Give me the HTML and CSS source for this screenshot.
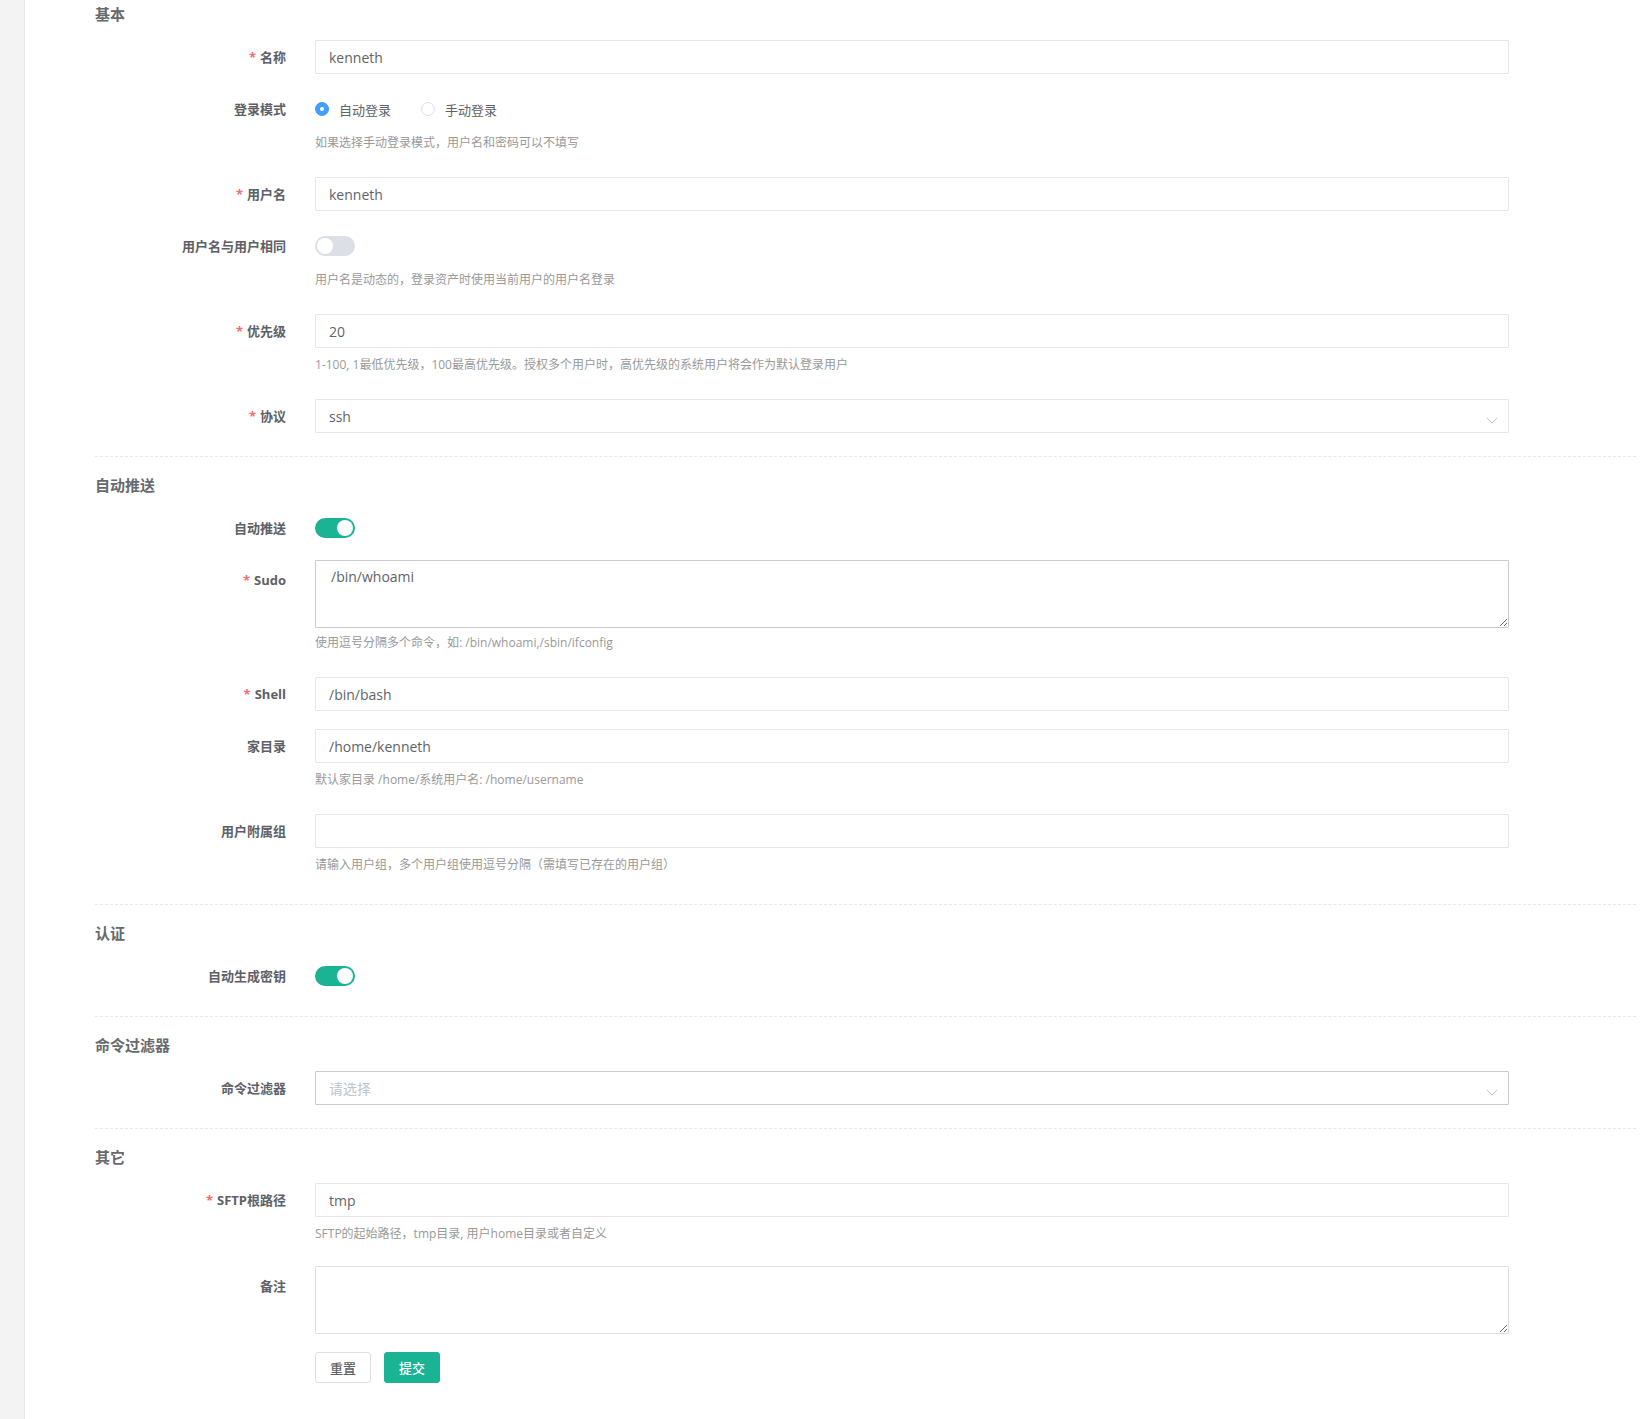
FILE: index.html
```html
<!DOCTYPE html>
<html lang="zh-CN">
<head>
    <meta charset="UTF-8">
    <meta name="viewport" content="width=device-width, initial-scale=1.0">
    <title>创建系统用户</title>
    <link rel="stylesheet" href="styles.css">
</head>
<body>
<div class="layout">
    <div class="sidebar"></div>
    <div class="panel">
        <form class="form">
            <!-- 基本 -->
            <div class="group">
                <h3 class="group-title">基本</h3>
                <div class="form-item">
                    <label class="form-label required">名称</label>
                    <div class="form-field">
                        <input class="input" type="text" value="kenneth">
                    </div>
                </div>
                <div class="form-item">
                    <label class="form-label">登录模式</label>
                    <div class="form-field">
                        <div class="control-line">
                            <span class="radio checked"><span class="radio-dot"></span>自动登录</span>
                            <span class="radio"><span class="radio-dot"></span>手动登录</span>
                        </div>
                        <div class="hint">如果选择手动登录模式，用户名和密码可以不填写</div>
                    </div>
                </div>
                <div class="form-item">
                    <label class="form-label required">用户名</label>
                    <div class="form-field">
                        <input class="input" type="text" value="kenneth">
                    </div>
                </div>
                <div class="form-item">
                    <label class="form-label">用户名与用户相同</label>
                    <div class="form-field">
                        <div class="control-line">
                            <span class="switch"><span class="switch-knob"></span></span>
                        </div>
                        <div class="hint">用户名是动态的，登录资产时使用当前用户的用户名登录</div>
                    </div>
                </div>
                <div class="form-item">
                    <label class="form-label required">优先级</label>
                    <div class="form-field">
                        <input class="input" type="text" value="20">
                        <div class="hint">1-100, 1最低优先级，100最高优先级。授权多个用户时，高优先级的系统用户将会作为默认登录用户</div>
                    </div>
                </div>
                <div class="form-item">
                    <label class="form-label required">协议</label>
                    <div class="form-field">
                        <div class="select">
                            <input class="input" type="text" value="ssh" readonly>
                            <svg class="select-arrow" width="12" height="12" viewBox="0 0 12 12"><polyline points="1,4 6,9 11,4" fill="none" stroke="#c0c4cc" stroke-width="1"/></svg>
                        </div>
                    </div>
                </div>
            </div>

            <!-- 自动推送 -->
            <div class="group">
                <h3 class="group-title">自动推送</h3>
                <div class="form-item switch-item">
                    <label class="form-label">自动推送</label>
                    <div class="form-field">
                        <div class="control-line">
                            <span class="switch on"><span class="switch-knob"></span></span>
                        </div>
                    </div>
                </div>
                <div class="form-item">
                    <label class="form-label label-area required">Sudo</label>
                    <div class="form-field">
                        <textarea class="textarea textarea-dark">/bin/whoami</textarea>
                        <div class="hint hint-tight">使用逗号分隔多个命令，如: /bin/whoami,/sbin/ifconfig</div>
                    </div>
                </div>
                <div class="form-item">
                    <label class="form-label required">Shell</label>
                    <div class="form-field">
                        <input class="input" type="text" value="/bin/bash">
                    </div>
                </div>
                <div class="form-item">
                    <label class="form-label">家目录</label>
                    <div class="form-field">
                        <input class="input" type="text" value="/home/kenneth">
                        <div class="hint">默认家目录 /home/系统用户名: /home/username</div>
                    </div>
                </div>
                <div class="form-item">
                    <label class="form-label">用户附属组</label>
                    <div class="form-field">
                        <input class="input" type="text" value="">
                        <div class="hint">请输入用户组，多个用户组使用逗号分隔（需填写已存在的用户组）</div>
                    </div>
                </div>
            </div>

            <!-- 认证 -->
            <div class="group">
                <h3 class="group-title">认证</h3>
                <div class="form-item">
                    <label class="form-label">自动生成密钥</label>
                    <div class="form-field">
                        <div class="control-line">
                            <span class="switch on"><span class="switch-knob"></span></span>
                        </div>
                    </div>
                </div>
            </div>

            <!-- 命令过滤器 -->
            <div class="group">
                <h3 class="group-title">命令过滤器</h3>
                <div class="form-item">
                    <label class="form-label">命令过滤器</label>
                    <div class="form-field">
                        <div class="select">
                            <input class="input input-dark" type="text" placeholder="请选择" readonly>
                            <svg class="select-arrow" width="12" height="12" viewBox="0 0 12 12"><polyline points="1,4 6,9 11,4" fill="none" stroke="#c0c4cc" stroke-width="1"/></svg>
                        </div>
                    </div>
                </div>
            </div>

            <!-- 其它 -->
            <div class="group">
                <h3 class="group-title">其它</h3>
                <div class="form-item">
                    <label class="form-label required">SFTP根路径</label>
                    <div class="form-field">
                        <input class="input" type="text" value="tmp">
                        <div class="hint hint-short">SFTP的起始路径，tmp目录, 用户home目录或者自定义</div>
                    </div>
                </div>
                <div class="form-item">
                    <label class="form-label label-area">备注</label>
                    <div class="form-field">
                        <textarea class="textarea"></textarea>
                    </div>
                </div>
                <div class="form-item">
                    <span></span>
                    <div class="form-actions">
                        <button type="button" class="btn">重置</button>
                        <button type="button" class="btn btn-primary">提交</button>
                    </div>
                </div>
            </div>
        </form>
    </div>
</div>
</body>
</html>
```

FILE: styles.css
```css
* {
    box-sizing: border-box;
}
body {
    margin: 0;
    background: #fff;
    font-family: "Open Sans", "Noto Sans CJK SC", sans-serif;
    color: #606266;
}
.layout {
    display: flex;
    min-height: 100vh;
}
.sidebar {
    width: 24px;
    flex-shrink: 0;
    background: #f3f3f4;
}
.panel {
    flex: 1;
    background: #fff;
    border-left: 1px solid #e7eaec;
    padding: 4px 16px 20px 70px;
}
.group {
    padding-bottom: 5px;
}
.group + .group {
    border-top: 1px dashed #e7eaec;
    padding-top: 18px;
}
.group-title {
    margin: 0 0 16px;
    height: 20px;
    line-height: 20px;
    font-size: 15px;
    font-weight: bold;
    color: #676a6c;
}
.form-item {
    display: grid;
    grid-template-columns: 191px 1194px;
    column-gap: 29px;
    margin-bottom: 18px;
}
.switch-item {
    margin-bottom: 15px;
}
.form-label {
    line-height: 34px;
    text-align: right;
    font-size: 13px;
    font-weight: bold;
    color: #5e6066;
}
.label-area {
    padding-top: 3px;
}
.required::before {
    content: "*";
    color: #f56c6c;
    margin-right: 4px;
}
.control-line {
    height: 34px;
    display: flex;
    align-items: center;
}
.input {
    display: block;
    width: 100%;
    height: 34px;
    padding: 0 13px;
    border: 1px solid #e5e6e7;
    border-radius: 1px;
    font: inherit;
    font-size: 14px;
    color: #5f6368;
    background: #fff;
    outline: none;
}
.input::placeholder {
    color: #c0c4cc;
}
.input-dark {
    border-color: #c8cad1;
}
.textarea {
    display: block;
    width: 100%;
    height: 68px;
    padding: 5px 15px;
    border: 1px solid #dcdfe6;
    border-radius: 1px;
    font: inherit;
    font-size: 14px;
    line-height: 1.5;
    color: #5f6368;
    resize: vertical;
    outline: none;
}
.textarea-dark {
    border-color: #c8cad1;
}
.hint {
    font-size: 12px;
    line-height: 18px;
    padding: 8px 0 7px;
    color: #999;
}
.hint-tight {
    padding: 6px 0 7px;
}
.hint-short {
    padding: 8px 0 5px;
}
.select {
    position: relative;
}
.select-arrow {
    position: absolute;
    right: 11px;
    top: 15px;
}
.radio {
    display: inline-flex;
    align-items: center;
    font-size: 13px;
    color: #606266;
    margin-right: 30px;
}
.radio-dot {
    width: 14px;
    height: 14px;
    border: 1px solid #dcdfe6;
    border-radius: 50%;
    background: #fff;
    margin-right: 10px;
    display: flex;
    align-items: center;
    justify-content: center;
}
.radio.checked .radio-dot {
    border-color: #409eff;
    background: #409eff;
}
.radio.checked .radio-dot::after {
    content: "";
    width: 4px;
    height: 4px;
    border-radius: 50%;
    background: #fff;
}
.switch {
    display: inline-block;
    position: relative;
    width: 40px;
    height: 20px;
    border-radius: 10px;
    background: #dcdfe6;
}
.switch-knob {
    position: absolute;
    top: 2px;
    left: 2px;
    width: 16px;
    height: 16px;
    border-radius: 50%;
    background: #fff;
}
.switch.on {
    background: #1ab394;
}
.switch.on .switch-knob {
    left: 22px;
}
.form-actions {
    display: flex;
    gap: 13px;
}
.btn {
    width: 56px;
    height: 31px;
    padding: 0;
    border: 1px solid #dcdfe6;
    border-radius: 3px;
    background: #fff;
    font: inherit;
    font-size: 13px;
    font-weight: 500;
    color: #606266;
    cursor: pointer;
}
.btn-primary {
    background: #1ab394;
    border-color: #1ab394;
    color: #fff;
}
```
